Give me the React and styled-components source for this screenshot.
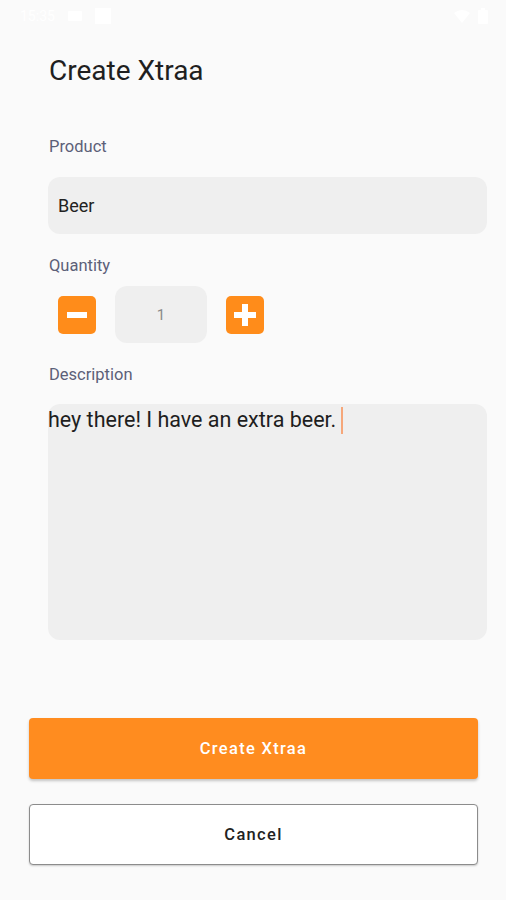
import React from 'react';
import styled, { createGlobalStyle } from 'styled-components';

const GlobalStyle = createGlobalStyle`
  html, body {
    margin: 0;
    padding: 0;
    background: #fafafa;
  }
  body {
    font-family: Roboto, "Liberation Sans", sans-serif;
  }
`;

const Screen = styled.div`
  width: 506px;
  height: 900px;
  display: flex;
  flex-direction: column;
  background: #fafafa;
  box-sizing: border-box;
`;

const StatusBar = styled.div`
  height: 32px;
  display: flex;
  align-items: center;
  justify-content: space-between;
  padding: 0 18px 0 20px;
  color: #ffffff;
  font-size: 14px;
`;

const StatusLeft = styled.div`
  display: flex;
  align-items: center;
  gap: 12px;
`;

const StatusRight = styled.div`
  display: flex;
  align-items: center;
  gap: 8px;
`;

const Form = styled.div`
  display: flex;
  flex-direction: column;
  padding: 20px 19px 0 48px;
  flex: 1;
`;

const Title = styled.h1`
  margin: 0 0 0 1px;
  font-size: 28px;
  font-weight: 400;
  color: #1f1f1f;
  line-height: 38px;
`;

const Label = styled.div`
  font-size: 16.5px;
  color: #5c6078;
  margin-top: ${p => p.$top}px;
  margin-left: 1px;
  line-height: 18px;
`;

const Field = styled.div`
  margin-top: ${p => p.$top}px;
  height: ${p => p.$height}px;
  background: #efefef;
  border-radius: 12px;
  box-sizing: border-box;
`;

const InputText = styled.div`
  padding: 0 10px;
  height: 100%;
  display: flex;
  align-items: center;
  font-size: 18px;
  color: #222;
`;

const QtyRow = styled.div`
  display: flex;
  align-items: center;
  gap: 19px;
  margin-top: 11px;
  padding-left: 10px;
`;

const StepButton = styled.button`
  width: 38px;
  height: 38px;
  border: none;
  border-radius: 5px;
  background: #ff8c1a;
  padding: 0;
  display: flex;
  align-items: center;
  justify-content: center;
`;

const QtyBox = styled.div`
  width: 92px;
  height: 57px;
  background: #efefef;
  border-radius: 12px;
  display: flex;
  align-items: center;
  justify-content: center;
  font-size: 15px;
  color: #8a8a8a;
`;

const DescText = styled.div`
  font-size: 21.5px;
  color: #1e1e1e;
  line-height: 32px;
  display: flex;
  align-items: center;
`;

const Caret = styled.span`
  display: inline-block;
  width: 2px;
  height: 27px;
  background: #f6a77a;
  margin-left: 5px;
`;

const Actions = styled.div`
  display: flex;
  flex-direction: column;
  gap: 25px;
  padding: 0 28px 35px 29px;
`;

const ActionButton = styled.button`
  height: 61px;
  width: 100%;
  border-radius: 4px;
  font-family: Roboto, "Liberation Sans", sans-serif;
  font-size: 16.5px;
  font-weight: 500;
  letter-spacing: 1.3px;
  background: ${p => (p.$primary ? '#ff8c1f' : '#ffffff')};
  color: ${p => (p.$primary ? '#ffffff' : '#222222')};
  border: ${p => (p.$primary ? 'none' : '1px solid #8c8c8c')};
  box-shadow: ${p => (p.$primary ? '0 2px 3px rgba(0,0,0,0.22)' : '0 1px 2px rgba(0,0,0,0.2)')};
`;

const Minus = () => (
  <svg width="20" height="6" viewBox="0 0 20 6">
    <rect x="0" y="0" width="20" height="6" fill="#fff" />
  </svg>
);

const Plus = () => (
  <svg width="22" height="22" viewBox="0 0 22 22">
    <rect x="8" y="0" width="6" height="22" fill="#fff" />
    <rect x="0" y="8" width="22" height="6" fill="#fff" />
  </svg>
);

export default function App() {
  return (
    <>
      <GlobalStyle />
      <Screen>
        <StatusBar>
          <StatusLeft>
            <span>15:35</span>
            <svg width="16" height="14" viewBox="0 0 16 14">
              <rect x="1" y="2" width="14" height="10" rx="1" fill="#fff" />
            </svg>
            <svg width="16" height="16" viewBox="0 0 16 16">
              <rect x="0" y="0" width="16" height="16" fill="#fff" />
            </svg>
          </StatusLeft>
          <StatusRight>
            <svg width="16" height="14" viewBox="0 0 16 14">
              <path d="M0 4 L8 14 L16 4 Q8 -2 0 4 Z" fill="#fff" />
            </svg>
            <svg width="10" height="16" viewBox="0 0 10 16">
              <rect x="3" y="0" width="4" height="2" fill="#fff" />
              <rect x="0" y="2" width="10" height="14" rx="1" fill="#fff" />
            </svg>
          </StatusRight>
        </StatusBar>
        <Form>
          <Title>Create Xtraa</Title>
          <Label $top={48}>Product</Label>
          <Field $top={21} $height={57}>
            <InputText>Beer</InputText>
          </Field>
          <Label $top={23}>Quantity</Label>
          <QtyRow>
            <StepButton aria-label="decrease"><Minus /></StepButton>
            <QtyBox>1</QtyBox>
            <StepButton aria-label="increase"><Plus /></StepButton>
          </QtyRow>
          <Label $top={23}>Description</Label>
          <Field $top={20} $height={236}>
            <DescText>
              hey there! I have an extra beer.<Caret />
            </DescText>
          </Field>
        </Form>
        <Actions>
          <ActionButton $primary>Create Xtraa</ActionButton>
          <ActionButton>Cancel</ActionButton>
        </Actions>
      </Screen>
    </>
  );
}
